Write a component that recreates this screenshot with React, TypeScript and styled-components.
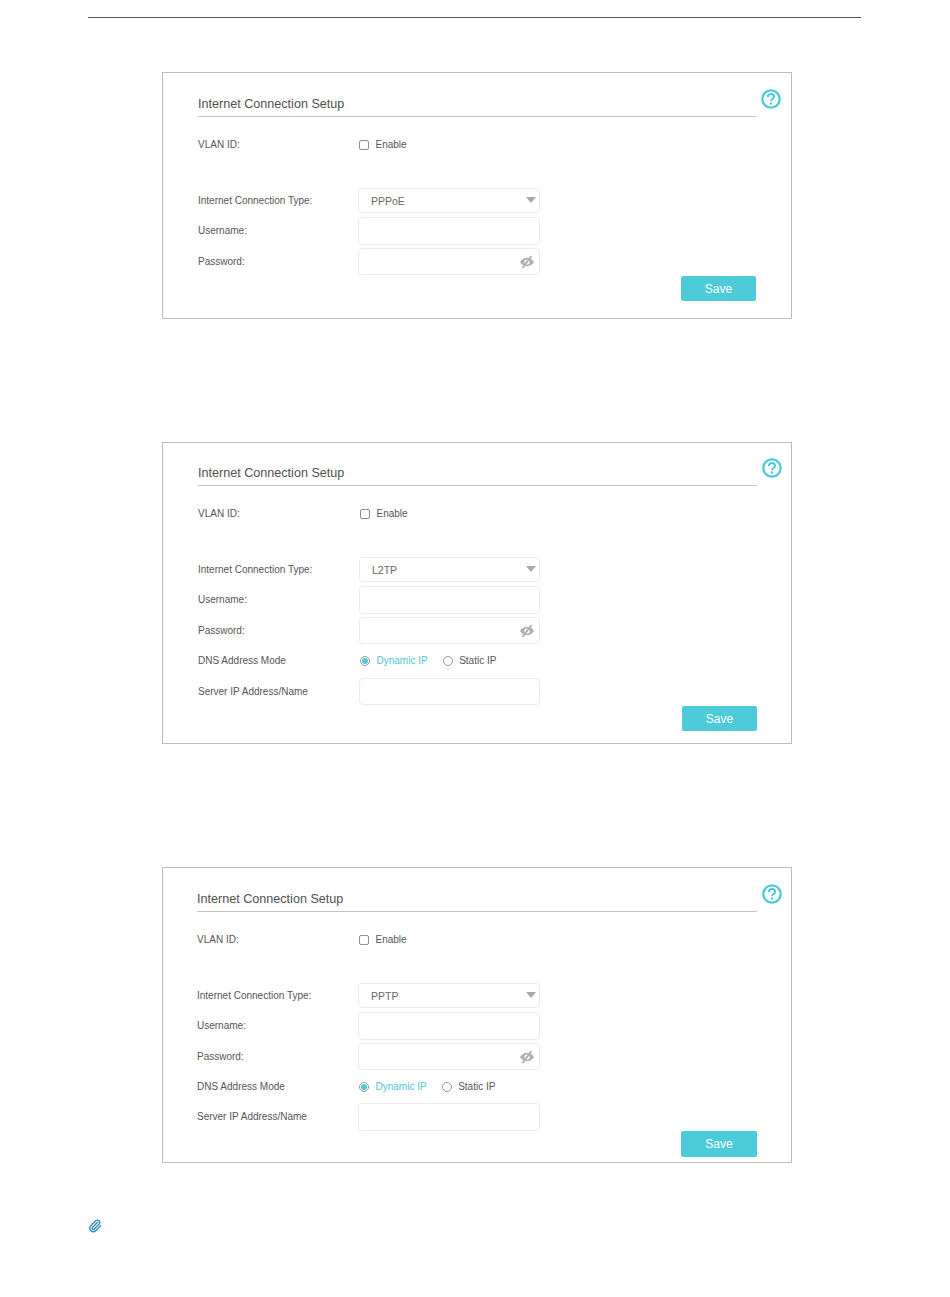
import React from 'react'
import styled, { createGlobalStyle } from 'styled-components'
import { Paperclip } from 'lucide-react'

const GlobalStyle = createGlobalStyle`
  html, body {
    margin: 0;
    padding: 0;
    background: #fff;
    font-family: 'Liberation Sans', Arial, sans-serif;
  }
`

const Page = styled.div`
  width: 950px;
  height: 1297px;
  padding-top: 17px;
  box-sizing: border-box;
  overflow: hidden;
`

const TopRule = styled.div`
  height: 1px;
  width: 773px;
  margin-left: 88px;
  background: #555;
`

const Panels = styled.div`
  display: flex;
  flex-direction: column;
  margin-left: 162px;
  margin-top: 54px;
`

type PanelBox = {
  $inset: number
  $outset: number
  $gapBelow: number
  $labelWidth: number
  $fieldWidth: number
}

const Panel = styled.section<PanelBox>`
  --label-width: ${({ $labelWidth }) => $labelWidth}px;
  --field-width: ${({ $fieldWidth }) => $fieldWidth}px;
  position: relative;
  box-sizing: border-box;
  width: 630px;
  padding: 0 ${({ $outset }) => $outset}px 0 ${({ $inset }) => $inset}px;
  margin-bottom: ${({ $gapBelow }) => $gapBelow}px;
  border: 1px solid #bdbdbd;
`

const Title = styled.h2<{ $height: number }>`
  box-sizing: border-box;
  height: ${({ $height }) => $height}px;
  margin: 0;
  padding-bottom: 5px;
  display: flex;
  align-items: flex-end;
  border-bottom: 1px solid #c4c4c4;
  font-size: 12.6px;
  font-weight: 400;
  color: #505050;
`

const Row = styled.div<{ $height: number; $after?: number }>`
  display: grid;
  grid-template-columns: var(--label-width) var(--field-width);
  align-items: center;
  height: ${({ $height }) => $height}px;
  margin-bottom: ${({ $after }) => $after ?? 0}px;
  font-size: 10px;
  color: #555;
`

const VlanRow = styled(Row)`
  margin-top: 18px;
`

const Label = styled.label<{ $raised?: boolean }>`
  padding-bottom: ${({ $raised }) => ($raised ? 1 : 0)}px;
  color: #555;
`

const Options = styled.div`
  display: flex;
  align-items: center;
  gap: 14px;
`

const Option = styled.span<{ $active?: boolean }>`
  display: inline-flex;
  align-items: center;
  gap: 6.5px;
  padding-left: 1px;
  color: ${({ $active }) => ($active ? '#4fc6d6' : '#555')};
`

const Checkbox = styled.span`
  box-sizing: border-box;
  width: 10px;
  height: 10px;
  border: 1px solid #8f8f8f;
  border-radius: 2px;
`

const Radio = styled.span<{ $active?: boolean }>`
  box-sizing: border-box;
  display: inline-flex;
  align-items: center;
  justify-content: center;
  width: 10px;
  height: 10px;
  border: 1px solid #9a9a9a;
  border-radius: 50%;
  &::after {
    content: '';
    width: 6px;
    height: 6px;
    border-radius: 50%;
    background: ${({ $active }) => ($active ? '#4dcbd9' : 'transparent')};
  }
`

const Field = styled.div`
  box-sizing: border-box;
  display: flex;
  align-items: center;
  justify-content: space-between;
  height: 100%;
  padding: 0 4px 0 12px;
  border: 1px solid #ebebeb;
  border-radius: 4px;
  background: #fff;
  font-size: 10.5px;
  color: #666;
`

const Caret = styled.span`
  width: 0;
  height: 0;
  margin: 0 -1px 2px 0;
  border-left: 5px solid transparent;
  border-right: 5px solid transparent;
  border-top: 6px solid #a9a9a9;
`

const Footer = styled.div<{ $before: number; $below: number }>`
  display: flex;
  justify-content: flex-end;
  margin-top: ${({ $before }) => $before}px;
  padding-bottom: ${({ $below }) => $below}px;
`

const SaveButton = styled.button<{ $large?: boolean }>`
  width: ${({ $large }) => ($large ? 76 : 75)}px;
  height: ${({ $large }) => ($large ? 26 : 25)}px;
  padding: 0;
  border: 0;
  border-radius: 2px;
  background: #4dcbd9;
  color: #fff;
  font-family: inherit;
  font-size: 12px;
`

const HelpIcon = styled.svg<{ $top: number; $right: number }>`
  position: absolute;
  top: ${({ $top }) => $top}px;
  right: ${({ $right }) => $right}px;
  width: 20px;
  height: 20px;
`

const NoteIcon = styled(Paperclip)`
  display: block;
  margin: 1px 0 0 88px;
  color: #3a94b5;
`

const Help = ({ top, right }: { top: number; right: number }) => (
  <HelpIcon $top={top} $right={right} viewBox="0 0 20 20" fill="none" stroke="#4dcbd9">
    <circle cx="10" cy="10" r="8.7" strokeWidth="2.3" />
    <path d="M6.900 8c0-1.900 1.300-3 3.100-3s3.100 1.100 3.100 2.800c0 2.200-3.100 2.300-3.100 4.400" strokeWidth="2" />
    <path d="M10 13.500v2" strokeWidth="2.100" />
  </HelpIcon>
)

const EyeOff = () => (
  <svg width="16" height="14" viewBox="0 0 16 14">
    <path
      d="M1 7c2-3 4.300-4.300 7-4.300S13 4 15 7c-2 3-4.300 4.300-7 4.300S3 10 1 7z"
      fill="#b0b0b0"
    />
    <circle cx="8" cy="7" r="2.600" fill="#fff" />
    <circle cx="8" cy="7" r="1" fill="#b0b0b0" />
    <path d="M12.500 1 3.500 13" stroke="#b0b0b0" strokeWidth="1.800" />
  </svg>
)

type SetupProps = {
  connection: string
  inset: number
  outset: number
  labelWidth: number
  fieldWidth: number
  titleHeight: number
  gapBelow: number
  helpTop: number
  helpRight: number
  server?: { modeAfter: number; fieldHeight: number }
  footerBefore: number
  footerBelow: number
  largeSave?: boolean
}

const SetupPanel = ({
  connection,
  inset,
  outset,
  labelWidth,
  fieldWidth,
  titleHeight,
  gapBelow,
  helpTop,
  helpRight,
  server,
  footerBefore,
  footerBelow,
  largeSave,
}: SetupProps) => (
  <Panel
    $inset={inset}
    $outset={outset}
    $gapBelow={gapBelow}
    $labelWidth={labelWidth}
    $fieldWidth={fieldWidth}
  >
    <Help top={helpTop} right={helpRight} />
    <Title $height={titleHeight}>Internet Connection Setup</Title>
    <VlanRow $height={19} $after={34}>
      <Label>VLAN ID:</Label>
      <Option>
        <Checkbox />
        Enable
      </Option>
    </VlanRow>
    <Row $height={25} $after={4}>
      <Label>Internet Connection Type:</Label>
      <Field>
        {connection}
        <Caret />
      </Field>
    </Row>
    <Row $height={28} $after={3}>
      <Label $raised>Username:</Label>
      <Field />
    </Row>
    <Row $height={27}>
      <Label>Password:</Label>
      <Field>
        <span />
        <EyeOff />
      </Field>
    </Row>
    {server && (
      <>
        <Row $height={33} $after={server.modeAfter}>
          <Label>DNS Address Mode</Label>
          <Options>
            <Option $active>
              <Radio $active />
              Dynamic IP
            </Option>
            <Option>
              <Radio />
              Static IP
            </Option>
          </Options>
        </Row>
        <Row $height={server.fieldHeight}>
          <Label $raised={server.fieldHeight === 28}>Server IP Address/Name</Label>
          <Field />
        </Row>
      </>
    )}
    <Footer $before={footerBefore} $below={footerBelow}>
      <SaveButton $large={largeSave}>Save</SaveButton>
    </Footer>
  </Panel>
)

export default function App() {
  return (
    <Page>
      <GlobalStyle />
      <TopRule />
      <Panels>
        <SetupPanel
          connection="PPPoE"
          inset={35}
          outset={35}
          labelWidth={160}
          fieldWidth={182}
          titleHeight={44}
          gapBelow={123}
          helpTop={16}
          helpRight={10}
          footerBefore={1}
          footerBelow={17}
        />
        <SetupPanel
          connection="L2TP"
          inset={35}
          outset={34}
          labelWidth={161}
          fieldWidth={181}
          titleHeight={43}
          gapBelow={123}
          helpTop={15}
          helpRight={9}
          server={{ modeAfter: 1, fieldHeight: 27 }}
          footerBefore={1}
          footerBelow={12}
        />
        <SetupPanel
          connection="PPTP"
          inset={34}
          outset={34}
          labelWidth={161}
          fieldWidth={182}
          titleHeight={44}
          gapBelow={55}
          helpTop={16}
          helpRight={9}
          server={{ modeAfter: 0, fieldHeight: 28 }}
          footerBefore={0}
          footerBelow={5}
          largeSave
        />
      </Panels>
      <NoteIcon size={14} strokeWidth={2.5} />
    </Page>
  )
}
